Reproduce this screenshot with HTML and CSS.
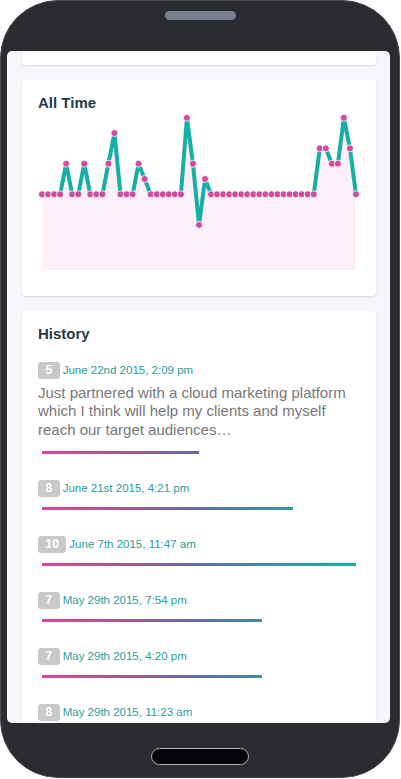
FILE: index.html
```html
<!DOCTYPE html>
<html lang="en">
<head>
<meta charset="utf-8">
<title>Activity</title>
<link rel="stylesheet" href="styles.css">
</head>
<body>
<div class="phone">
  <div class="bezel-top"><div class="speaker"></div></div>
  <div class="screen">
    <div class="card stub"></div>
    <section class="card chart-card">
      <h2 class="card-title">All Time</h2>
      <svg class="chart" width="322" height="160" viewBox="0 0 322 160">
        <polygon fill="#fdf0f8" points="4,82.3 10.04,82.3 16.08,82.3 22.12,82.3 28.15,51.7 34.19,82.3 40.23,82.3 46.27,51.7 52.31,82.3 58.35,82.3 64.38,82.3 70.42,51.7 76.46,21.1 82.5,82.3 88.54,82.3 94.58,82.3 100.62,51.7 106.65,67 112.69,82.3 118.73,82.3 124.77,82.3 130.81,82.3 136.85,82.3 142.88,82.3 148.92,5.8 154.96,51.7 161,112.9 167.04,67 173.08,82.3 275.73,82.3 281.77,36.4 287.81,36.4 293.85,51.7 299.88,51.7 305.92,5.8 311.96,36.4 318,82.3 318,158 4,158"/>
        <polyline fill="none" stroke="#14afa5" stroke-width="4" stroke-linejoin="round" points="4,82.3 10.04,82.3 16.08,82.3 22.12,82.3 28.15,51.7 34.19,82.3 40.23,82.3 46.27,51.7 52.31,82.3 58.35,82.3 64.38,82.3 70.42,51.7 76.46,21.1 82.5,82.3 88.54,82.3 94.58,82.3 100.62,51.7 106.65,67 112.69,82.3 118.73,82.3 124.77,82.3 130.81,82.3 136.85,82.3 142.88,82.3 148.92,5.8 154.96,51.7 161,112.9 167.04,67 173.08,82.3 275.73,82.3 281.77,36.4 287.81,36.4 293.85,51.7 299.88,51.7 305.92,5.8 311.96,36.4 318,82.3"/>
        <g fill="#cf4c9f" stroke="#ffffff" stroke-width="0.8">
          <circle cx="4" cy="82.3" r="3.5"/>
          <circle cx="10.04" cy="82.3" r="3.5"/>
          <circle cx="16.08" cy="82.3" r="3.5"/>
          <circle cx="22.12" cy="82.3" r="3.5"/>
          <circle cx="28.15" cy="51.7" r="3.5"/>
          <circle cx="34.19" cy="82.3" r="3.5"/>
          <circle cx="40.23" cy="82.3" r="3.5"/>
          <circle cx="46.27" cy="51.7" r="3.5"/>
          <circle cx="52.31" cy="82.3" r="3.5"/>
          <circle cx="58.35" cy="82.3" r="3.5"/>
          <circle cx="64.38" cy="82.3" r="3.5"/>
          <circle cx="70.42" cy="51.7" r="3.5"/>
          <circle cx="76.46" cy="21.1" r="3.5"/>
          <circle cx="82.5" cy="82.3" r="3.5"/>
          <circle cx="88.54" cy="82.3" r="3.5"/>
          <circle cx="94.58" cy="82.3" r="3.5"/>
          <circle cx="100.62" cy="51.7" r="3.5"/>
          <circle cx="106.65" cy="67" r="3.5"/>
          <circle cx="112.69" cy="82.3" r="3.5"/>
          <circle cx="118.73" cy="82.3" r="3.5"/>
          <circle cx="124.77" cy="82.3" r="3.5"/>
          <circle cx="130.81" cy="82.3" r="3.5"/>
          <circle cx="136.85" cy="82.3" r="3.5"/>
          <circle cx="142.88" cy="82.3" r="3.5"/>
          <circle cx="148.92" cy="5.8" r="3.5"/>
          <circle cx="154.96" cy="51.7" r="3.5"/>
          <circle cx="161" cy="112.9" r="3.5"/>
          <circle cx="167.04" cy="67" r="3.5"/>
          <circle cx="173.08" cy="82.3" r="3.5"/>
          <circle cx="179.12" cy="82.3" r="3.5"/>
          <circle cx="185.15" cy="82.3" r="3.5"/>
          <circle cx="191.19" cy="82.3" r="3.5"/>
          <circle cx="197.23" cy="82.3" r="3.5"/>
          <circle cx="203.27" cy="82.3" r="3.5"/>
          <circle cx="209.31" cy="82.3" r="3.5"/>
          <circle cx="215.35" cy="82.3" r="3.5"/>
          <circle cx="221.38" cy="82.3" r="3.5"/>
          <circle cx="227.42" cy="82.3" r="3.5"/>
          <circle cx="233.46" cy="82.3" r="3.5"/>
          <circle cx="239.5" cy="82.3" r="3.5"/>
          <circle cx="245.54" cy="82.3" r="3.5"/>
          <circle cx="251.58" cy="82.3" r="3.5"/>
          <circle cx="257.62" cy="82.3" r="3.5"/>
          <circle cx="263.65" cy="82.3" r="3.5"/>
          <circle cx="269.69" cy="82.3" r="3.5"/>
          <circle cx="275.73" cy="82.3" r="3.5"/>
          <circle cx="281.77" cy="36.4" r="3.5"/>
          <circle cx="287.81" cy="36.4" r="3.5"/>
          <circle cx="293.85" cy="51.7" r="3.5"/>
          <circle cx="299.88" cy="51.7" r="3.5"/>
          <circle cx="305.92" cy="5.8" r="3.5"/>
          <circle cx="311.96" cy="36.4" r="3.5"/>
          <circle cx="318" cy="82.3" r="3.5"/>
        </g>
      </svg>
    </section>
    <section class="card history-card">
      <h2 class="card-title">History</h2>
      <ul class="entries">
        <li class="entry">
          <div class="entry-head"><span class="badge">5</span><span class="date">June 22nd 2015, 2:09 pm</span></div>
          <p class="entry-text">Just partnered with a cloud marketing platform which I think will help my clients and myself reach our target audiences…</p>
          <div class="track with-text"><div class="fill" style="width:50%"></div></div>
        </li>
        <li class="entry">
          <div class="entry-head"><span class="badge">8</span><span class="date">June 21st 2015, 4:21 pm</span></div>
          <div class="track"><div class="fill" style="width:80%"></div></div>
        </li>
        <li class="entry">
          <div class="entry-head"><span class="badge">10</span><span class="date">June 7th 2015, 11:47 am</span></div>
          <div class="track"><div class="fill" style="width:100%"></div></div>
        </li>
        <li class="entry">
          <div class="entry-head"><span class="badge">7</span><span class="date">May 29th 2015, 7:54 pm</span></div>
          <div class="track"><div class="fill" style="width:70%"></div></div>
        </li>
        <li class="entry">
          <div class="entry-head"><span class="badge">7</span><span class="date">May 29th 2015, 4:20 pm</span></div>
          <div class="track"><div class="fill" style="width:70%"></div></div>
        </li>
        <li class="entry">
          <div class="entry-head"><span class="badge">8</span><span class="date">May 29th 2015, 11:23 am</span></div>
          <div class="track"><div class="fill" style="width:80%"></div></div>
        </li>
      </ul>
    </section>
  </div>
  <div class="bezel-bottom"><div class="home"></div></div>
</div>
</body>
</html>
```

FILE: styles.css
```css
html, body {
  margin: 0;
  padding: 0;
  background: #ffffff;
}

body {
  font-family: "Liberation Sans", Arial, sans-serif;
}

.phone {
  box-sizing: border-box;
  width: 400px;
  height: 778px;
  border: 1px solid #4b4c52;
  border-radius: 58px;
  background: #2b2c31;
  padding: 0 9px 0 6px;
  display: flex;
  flex-direction: column;
  overflow: hidden;
}

.bezel-top {
  flex: none;
  height: 50px;
  margin: 0 -9px 0 -6px;
  display: flex;
  justify-content: center;
}

.speaker {
  width: 71px;
  height: 9px;
  margin-top: 10px;
  border-radius: 5px;
  background: #7b7e8c;
}

.screen {
  flex: none;
  height: 672px;
  box-sizing: border-box;
  background: #f6f7fd;
  border-radius: 5px;
  overflow: hidden;
  padding: 0 14px 0 15px;
}

.bezel-bottom {
  flex: 1;
  margin: 0 -9px 0 -6px;
  display: flex;
  justify-content: center;
}

.home {
  box-sizing: border-box;
  width: 98px;
  height: 17px;
  margin-top: 25px;
  border: 1.5px solid #b3b3b6;
  border-radius: 9px;
  background: #04040b;
}

.card {
  background: #ffffff;
  border-radius: 4px;
  box-shadow: 0 1px 2px rgba(40, 44, 80, 0.14);
  margin-bottom: 15px;
}

.stub {
  height: 14px;
  border-radius: 0 0 4px 4px;
}

.chart-card {
  padding: 14px 16px 24px;
}

.card-title {
  margin: 0;
  font-size: 15px;
  line-height: 18px;
  font-weight: bold;
  color: #253a45;
}

.chart {
  display: block;
}

.history-card {
  padding: 13.5px 16px 10px;
}

.entries {
  list-style: none;
  margin: 19px 0 0;
  padding: 0;
}

.entry {
  margin-bottom: 25.5px;
}

.entry-head {
  display: flex;
  align-items: center;
  height: 17px;
}

.badge {
  display: inline-block;
  height: 17px;
  line-height: 17px;
  padding: 0 7.5px;
  border-radius: 3px;
  background: #c9c9c9;
  color: #ffffff;
  font-size: 12px;
  font-weight: bold;
  margin-right: 3px;
}

.date {
  font-size: 11.5px;
  color: #2a9e97;
}

.entry-text {
  margin: 5px 0 0;
  font-size: 15px;
  line-height: 18.5px;
  color: #787878;
}

.track {
  margin: 10.5px 4px 0;
}

.track.with-text {
  margin-top: 12px;
}

.fill {
  height: 3px;
  background-image: linear-gradient(90deg, #e2409a 0%, #a65993 25%, #5f6d9c 50%, #478aa0 70%, #2e9ca3 82%, #12b4a6 100%);
  background-size: 314px 3px;
  background-repeat: no-repeat;
}
```
